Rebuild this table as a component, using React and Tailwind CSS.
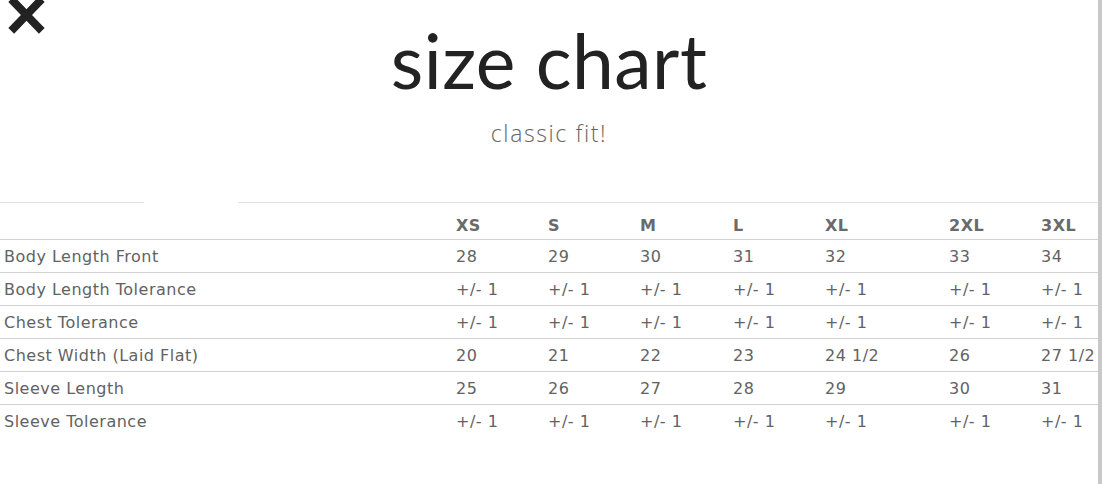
const sizes = ['XS', 'S', 'M', 'L', 'XL', '2XL', '3XL']

const rows = [
  { label: 'Body Length Front', values: ['28', '29', '30', '31', '32', '33', '34'] },
  { label: 'Body Length Tolerance', values: Array(7).fill('+/- 1') },
  { label: 'Chest Tolerance', values: Array(7).fill('+/- 1') },
  { label: 'Chest Width (Laid Flat)', values: ['20', '21', '22', '23', '24 1/2', '26', '27 1/2'] },
  { label: 'Sleeve Length', values: ['25', '26', '27', '28', '29', '30', '31'] },
  { label: 'Sleeve Tolerance', values: Array(7).fill('+/- 1') },
]

// column widths measured from the screenshot
const colWidths = ['w-[452px]', 'w-[92px]', 'w-[92px]', 'w-[93px]', 'w-[92px]', 'w-[124px]', 'w-[92px]', 'w-[61px]']

function CloseIcon() {
  return (
    <svg width="44" height="36" viewBox="0 0 44 36" className="block">
      <path d="M13 3 L38 29 M38 3 L13 29" stroke="#222" strokeWidth="8" strokeLinecap="square" />
    </svg>
  )
}

export default function App() {
  return (
    <div className="flex w-[1102px] h-[484px] overflow-hidden bg-white">
      <div className="flex-1 flex flex-col">
        <div className="h-[0px] relative">
          <div className="absolute left-[1px] top-[-1px]">
            <CloseIcon />
          </div>
        </div>

        <h1 className="mt-[18px] text-center text-[75px] leading-[84px] text-[#222] font-['Lato',sans-serif] tracking-[0.5px]">
          size chart
        </h1>
        <p className="mt-[16px] text-center text-[23px] leading-[30px] text-[#666] font-light tracking-[1.6px] font-['Open_Sans',sans-serif]">
          classic fit!
        </p>

        <div className="mt-[54px] flex">
          <div className="w-[144px] border-t border-[#e2e2e2]" />
          <div className="w-[94px]" />
          <div className="flex-1 border-t border-[#e2e2e2]" />
        </div>

        <table className="table-fixed border-collapse w-full text-[16px] leading-[20px] tracking-[0.5px] text-[#626262] font-['DejaVu_Sans',sans-serif]">
          <thead>
            <tr>
              {[''].concat(sizes).map((s, i) => (
                <th key={i} className={`${colWidths[i]} text-left font-semibold text-[#6a6a6a] pl-[4px] pt-[13px] pb-[3px]`}>
                  {s}
                </th>
              ))}
            </tr>
          </thead>
          <tbody>
            {rows.map(row => (
              <tr key={row.label} className="border-t border-[#d2d2d2]">
                <td className="pl-[4px] pt-[7px] pb-[5px] whitespace-nowrap">{row.label}</td>
                {row.values.map((v, i) => (
                  <td key={i} className="pl-[4px] pt-[7px] pb-[5px] whitespace-nowrap">{v}</td>
                ))}
              </tr>
            ))}
          </tbody>
        </table>
      </div>
      <div className="w-[4px] h-full bg-[#c9c9c9]" />
    </div>
  )
}
